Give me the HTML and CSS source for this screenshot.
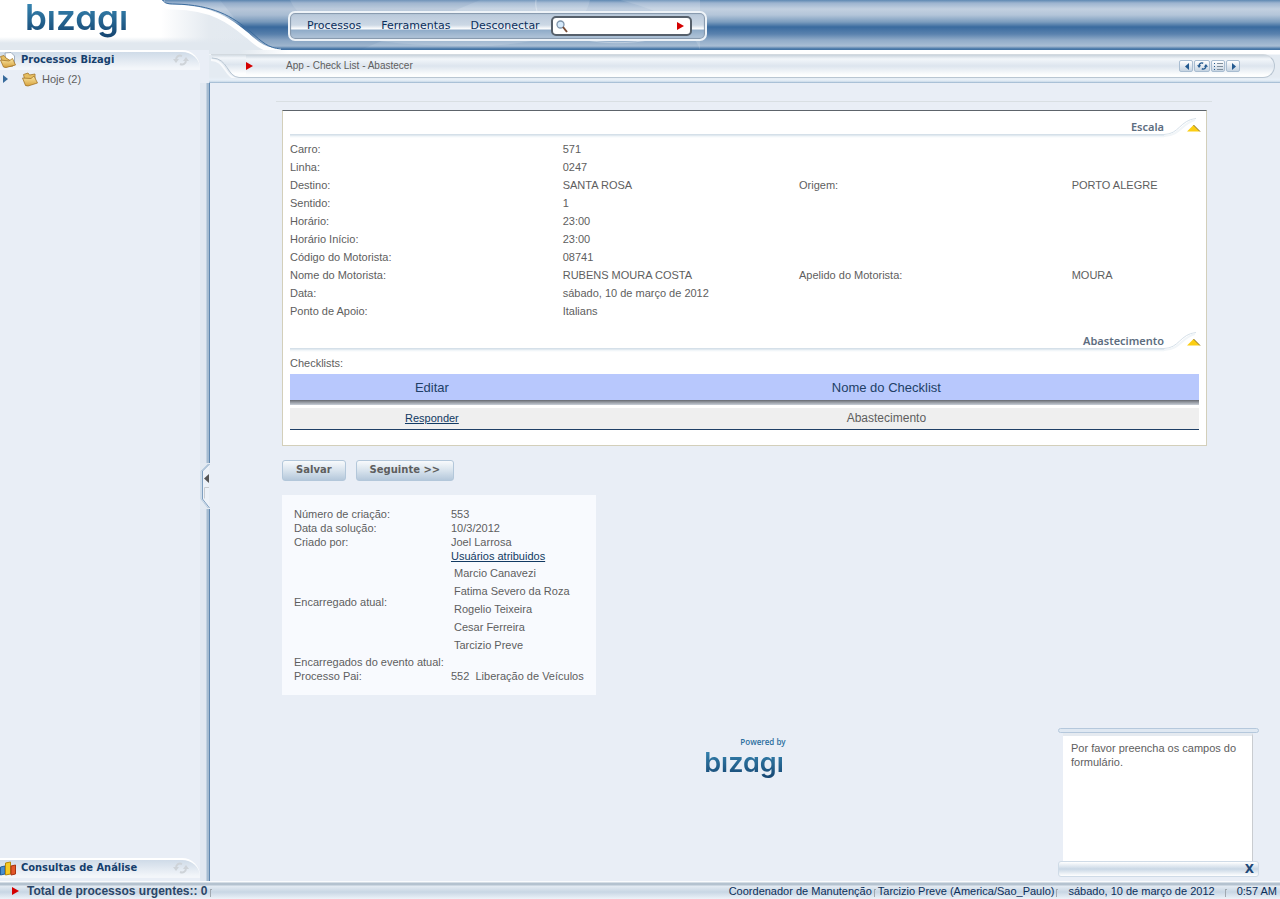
FILE: index.html
```html
<!DOCTYPE html>
<html lang="pt-BR">
<head>
<meta charset="utf-8">
<title>Bizagi - Abastecer</title>
<link rel="stylesheet" href="styles.css">
</head>
<body>
<svg class="defs" aria-hidden="true">
  <defs>
    <linearGradient id="folder" x1="0" y1="0" x2="0" y2="1"><stop offset="0" stop-color="#fbe9a6"/><stop offset="1" stop-color="#d7a13c"/></linearGradient>
    <symbol id="i-folder" viewBox="0 0 16 16">
      <path d="M1.500 3.500 L6 2 L7.500 4 L13 3 L13 12 L4 14.500 Z" fill="#e6bf63" stroke="#a4762a" stroke-width="0.800"/>
      <path d="M0.500 7 L9 7.500 L12 5 L15.500 12 L6 15 L3.500 14.500 Z" fill="url(#folder)" stroke="#a4762a" stroke-width="0.800"/>
    </symbol>
    <symbol id="i-docs" viewBox="0 0 16 16">
      <path d="M5 1 L11 0.500 L14.500 4 L14.500 12 L6 12 Z" fill="#fff" stroke="#8d9db0" stroke-width="0.800"/>
      <path d="M0.500 4.500 L4 3.500 L6 6 L11 9 L13 14 L4.500 15 Z" fill="#e6bf63" stroke="#a4762a" stroke-width="0.800"/>
      <path d="M0.500 8 L9 9 L12.500 6.500 L15.500 13 L6 15.500 L3.500 15 Z" fill="url(#folder)" stroke="#a4762a" stroke-width="0.800"/>
    </symbol>
    <symbol id="i-refresh" viewBox="0 0 16 14">
      <path d="M3 7 C3 3 6 1.800 9 3 M13 7 C13 11 10 12.200 7 11" fill="none" stroke="currentColor" stroke-width="2"/>
      <path d="M0 6 L6 6 L3 10 Z M16 8 L10 8 L13 4 Z" fill="currentColor"/>
    </symbol>
  </defs>
</svg>
<div class="app">
  <header class="header">
    <svg class="waves" viewBox="0 0 560 50" aria-hidden="true">
      <path d="M130 0 Q150 46 310 46 Q420 46 430 0 Z" fill="#fff" opacity="0.140"/>
      <path d="M60 0 H320 L200 50 H100 Z" fill="#345f8d" opacity="0.080"/>
      <path d="M376 0 C370 42 470 55 520 30" fill="none" stroke="#fff" opacity="0.350"/>
      <path d="M460 0 Q530 18 540 50 V0 Z" fill="#fff" opacity="0.150"/>
    </svg>
    <div class="brand"><span class="logo logo-large" role="img" aria-label="bizagi">bızagı</span></div>
    <svg class="curve" viewBox="0 0 120 50" aria-hidden="true">
      <defs>
        <linearGradient id="fade" x1="0" y1="0" x2="1" y2="0"><stop offset="0" stop-color="#fff"/><stop offset="0.400" stop-color="#e4eaf0"/><stop offset="1" stop-color="#e2e9f1"/></linearGradient>
        <linearGradient id="floor" x1="0" y1="0" x2="0" y2="1"><stop offset="0.740" stop-color="#e1e8ef" stop-opacity="0"/><stop offset="0.860" stop-color="#e1e8ef"/></linearGradient>
      </defs>
      <path d="M0 0 H1 C2 5 5 6 13 6 C51 7 69 18 88 34 C99 44 104 49 120 50 H0 Z" fill="url(#fade)"/>
      <path d="M0 0 H1 C2 5 5 6 13 6 C51 7 69 18 88 34 C99 44 104 49 120 50 H0 Z" fill="url(#floor)"/>
      <path d="M1 1 C2 6 5 7 13 7 C51 8 68 20 87 36 C98 46 104 50 120 51" fill="none" stroke="#fff" stroke-width="5"/>
      <path d="M2 0 C3 3 6 4 14 4 C52 5 71 16 90 32 C101 42 107 48 120 49" fill="none" stroke="#3b6c9e" stroke-width="1"/>
    </svg>
    <nav class="menu">
      <a href="#">Processos</a>
      <a href="#">Ferramentas</a>
      <a href="#">Desconectar</a>
      <form class="search">
        <svg width="12" height="13" viewBox="0 0 12 13" aria-hidden="true"><circle cx="4.500" cy="4.500" r="3.500" fill="#d5e9fa" stroke="#7f95ac" stroke-width="1.300"/><path d="M7 7 L11 12" stroke="#774b35" stroke-width="2"/></svg>
        <input type="text" aria-label="Pesquisar">
        <button type="button" aria-label="Buscar"><span class="arrow-red"></span></button>
      </form>
    </nav>
  </header>

  <div class="body">
    <aside class="sidebar">
      <section>
        <h2 class="side-title"><svg width="16" height="16"><use href="#i-docs"/></svg><span>Processos Bizagi</span><svg class="side-refresh" width="16" height="14"><use href="#i-refresh"/></svg></h2>
        <a class="tree-item" href="#"><span class="arrow-blue"></span><svg width="16" height="16"><use href="#i-folder"/></svg><span>Hoje (2)</span></a>
      </section>
      <h2 class="side-title"><svg width="16" height="16" viewBox="0 0 16 16"><path d="M0.500 7 L5 6 V14 L0.500 15 Z" fill="#4a8fd0" stroke="#25609d"/><path d="M5.500 3 L10.500 2 V14 L5.500 15 Z" fill="#f6cb26" stroke="#b88808"/><path d="M11 6 L15.500 5 V14 L11 15 Z" fill="#e2582b" stroke="#a83210"/></svg><span>Consultas de Análise</span><svg class="side-refresh" width="16" height="14"><use href="#i-refresh"/></svg></h2>
    </aside>

    <div class="work">
      <div class="toolbar">
        <svg class="tab" width="40" height="24" viewBox="0 0 40 24" aria-hidden="true">
          <defs><linearGradient id="bar" x1="0" y1="0" x2="0" y2="1"><stop offset="0" stop-color="#c9d3dc"/><stop offset="0.170" stop-color="#f2f6fa"/><stop offset="0.460" stop-color="#dde5ee"/><stop offset="0.850" stop-color="#fdfefe"/></linearGradient></defs>
          <path d="M0 0 H40 V23 H28 C17 23 18 5 2 4 Z" fill="url(#bar)"/>
          <path d="M0 6 C15 6 13 24 27 25" fill="none" stroke="#f8fafc" stroke-width="2"/>
          <path d="M1 4 C17 4 16 23 28 23.500 H40" fill="none" stroke="#b9c6d2"/>
          <path d="M0 0.500 H40" stroke="#d2d9df"/>
        </svg>
        <div class="toolbar-inner">
          <span class="arrow-red"></span>
          <span class="crumb">App - Check List - Abastecer</span>
          <div class="tools">
            <button type="button" aria-label="Anterior"><svg width="11" height="11" viewBox="0 0 11 11"><path d="M8 2 V9 L4 5.500 Z" fill="#22598f"/></svg></button>
            <button type="button" aria-label="Atualizar" class="wide"><svg width="11" height="10"><use href="#i-refresh"/></svg></button>
            <button type="button" aria-label="Lista"><svg width="11" height="11" viewBox="0 0 11 11"><path d="M1 2.500 H2 M1 5.500 H2 M1 8.500 H2" stroke="#22598f"/><path d="M4 2.500 H10 M4 5.500 H10 M4 8.500 H10" stroke="#7f8e9c"/></svg></button>
            <button type="button" aria-label="Próximo"><svg width="11" height="11" viewBox="0 0 11 11"><path d="M4 2 V9 L8 5.500 Z" fill="#22598f"/></svg></button>
          </div>
        </div>
      </div>

      <div class="stage">
        <div class="splitter">
          <button type="button" class="handle" aria-label="Recolher painel"><svg width="10" height="46" viewBox="0 0 10 46"><path d="M10 0 H0 V46 H10 Z" fill="#e3eaf2"/><path d="M9.500 1 L2.500 8 V36 L9.500 45" fill="#edf2f8" stroke="#7f9fbf"/><path d="M8 1 L1 8 V36 L8 45" fill="none" stroke="#bccfe0"/><path d="M9 11 V20 L4 15.500 Z" fill="#555"/><path d="M9 24.500 H4.500 V35.500" fill="none" stroke="#c8ccd0"/></svg></button>
        </div>
        <main class="content">
          <div class="rule"></div>
          <div class="panel">
            <div class="section-head"><span class="section-line"></span><h3>Escala</h3><button type="button" aria-label="Recolher Escala"><svg width="37" height="19" viewBox="0 0 37 19"><path d="M0 16.500 C15 16.500 16 2 32 0.500" fill="none" stroke="#d5e0e9"/><path d="M0 18 C16 18 18 5 31 2" fill="none" stroke="#f1f5f8" stroke-width="2"/><path d="M23 13.500 L29.500 7 L36 13.500 Z" fill="#fcce13"/><path d="M29.500 7 L36 13.500" fill="none" stroke="#8a7020"/></svg></button></div>
            <dl class="fields">
              <dt>Carro:</dt><dd>571</dd>
              <dt>Linha:</dt><dd>0247</dd>
              <dt>Destino:</dt><dd class="half">SANTA ROSA</dd><dt class="second">Origem:</dt><dd class="last">PORTO ALEGRE</dd>
              <dt>Sentido:</dt><dd>1</dd>
              <dt>Horário:</dt><dd>23:00</dd>
              <dt>Horário Início:</dt><dd>23:00</dd>
              <dt>Código do Motorista:</dt><dd>08741</dd>
              <dt>Nome do Motorista:</dt><dd class="half">RUBENS MOURA COSTA</dd><dt class="second">Apelido do Motorista:</dt><dd class="last">MOURA</dd>
              <dt>Data:</dt><dd>sábado, 10 de março de 2012</dd>
              <dt>Ponto de Apoio:</dt><dd>Italians</dd>
            </dl>
            <div class="section-head spaced"><span class="section-line"></span><h3>Abastecimento</h3><button type="button" aria-label="Recolher Abastecimento"><svg width="37" height="19" viewBox="0 0 37 19"><path d="M0 16.500 C15 16.500 16 2 32 0.500" fill="none" stroke="#d5e0e9"/><path d="M0 18 C16 18 18 5 31 2" fill="none" stroke="#f1f5f8" stroke-width="2"/><path d="M23 13.500 L29.500 7 L36 13.500 Z" fill="#fcce13"/><path d="M29.500 7 L36 13.500" fill="none" stroke="#8a7020"/></svg></button></div>
            <table class="checklist">
              <caption>Checklists:</caption>
              <thead><tr><th scope="col">Editar</th><th scope="col">Nome do Checklist</th></tr></thead>
              <tbody><tr class="edge"><td colspan="2"></td></tr><tr><td><a href="#">Responder</a></td><td>Abastecimento</td></tr></tbody>
            </table>
          </div>
          <div class="actions"><button type="button">Salvar</button><button type="button">Seguinte &gt;&gt;</button></div>
          <dl class="details">
            <dt>Número de criação:</dt><dd>553</dd>
            <dt>Data da solução:</dt><dd>10/3/2012</dd>
            <dt>Criado por:</dt><dd>Joel Larrosa</dd>
            <dt>Encarregado atual:</dt>
            <dd><a href="#">Usuários atribuidos</a>
              <ul><li>Marcio Canavezi</li><li>Fatima Severo da Roza</li><li>Rogelio Teixeira</li><li>Cesar Ferreira</li><li>Tarcizio Preve</li></ul>
            </dd>
            <dt>Encarregados do evento atual:</dt><dd></dd>
            <dt>Processo Pai:</dt><dd>552&nbsp; Liberação de Veículos</dd>
          </dl>
          <div class="powered"><span class="powered-by">Powered by</span><span class="logo logo-small" role="img" aria-label="bizagi">bızagı</span></div>
        </main>
        <aside class="note">
          <div class="note-top"></div>
          <p>Por favor preencha os campos do formulário.</p>
          <div class="note-bottom"><button type="button" aria-label="Fechar">X</button></div>
        </aside>
      </div>
    </div>
  </div>

  <footer class="status">
    <span class="arrow-red"></span>
    <strong>Total de processos urgentes:: 0</strong>
    <i class="sep"></i>
    <span class="role">Coordenador de Manutenção</span><i class="sep"></i>
    <span class="user">Tarcizio Preve (America/Sao_Paulo)</span><i class="sep"></i>
    <span class="date">sábado, 10 de março de 2012</span><i class="sep"></i>
    <span class="time">0:57 AM</span>
  </footer>
</div>
</body>
</html>
```
FILE: styles.css
```css
* { box-sizing: border-box; }
body {
  margin: 0;
  font: 11px/14px "Liberation Sans", Arial, sans-serif;
  color: #5e5e5e;
  background: #e9eef6;
}
button { font: inherit; color: inherit; border: 0; background: none; padding: 0; cursor: pointer; }
h2, h3, p, dl, dd, ul { margin: 0; padding: 0; }
svg { display: block; flex: none; }
.defs { position: absolute; width: 0; height: 0; }
.app { min-height: 100vh; display: flex; flex-direction: column; }

.arrow-red { flex: none; border: solid transparent; border-width: 4px 0 4px 7px; border-left-color: #d40000; }
.arrow-blue { flex: none; border: solid transparent; border-width: 4px 0 4px 5px; border-left-color: #376a9b; }

/* Header */
.header {
  position: relative;
  display: flex;
  height: 50px;
  background: linear-gradient(#5e88b2 0, #9db4cf 3px, #c2d0e0 9px, #b3c5d9 15px, #7c9dbe 22px, #3a6b9f 27px, #5a82ae 34px, #90abc8 40px, #a9bed4 46px, #4474a5 49px, #4474a5 50px);
}
.waves { position: absolute; left: 160px; top: 0; width: 560px; height: 50px; }
.brand {
  position: relative;
  width: 161px;
  padding-left: 25px;
  background: linear-gradient(#fff 37px, #e1e8ef 43px, #e1e8ef);
}
.logo {
  display: block;
  font-family: Inter, sans-serif;
  font-feature-settings: "cv11";
  font-weight: 600;
  color: transparent;
  background: linear-gradient(#3a8cb8, #123f6b);
  -webkit-background-clip: text;
  background-clip: text;
}
.logo-large { font-size: 35px; line-height: 34px; padding-bottom: 6px; }
.logo-small { font-size: 27px; line-height: 32px; padding-bottom: 2px; }
.curve { position: relative; width: 120px; height: 50px; }
.menu {
  position: relative;
  display: flex;
  align-items: center;
  gap: 20px;
  height: 30px;
  margin: 11px 0 0 7px;
  padding: 0 13px 0 17px;
  border: 2px solid #eef3f8;
  border-radius: 7px;
  box-shadow: inset 0 0 1px 1px #8496aa;
  background: linear-gradient(#b7c7d9, #ccd8e5 12px, #fff 16px, #8fabc8 17px, #b5c7da);
  font: 11px/14px "DejaVu Sans", Verdana, sans-serif;
}
.menu a { color: #0b2f5c; text-decoration: none; }
.search {
  display: flex;
  align-items: center;
  width: 141px;
  height: 20px;
  margin-left: -9px;
  padding: 0 6px 0 3px;
  border: 2px solid #56606b;
  border-radius: 5px;
  background: #fff;
}
.search input { flex: 1; min-width: 0; border: 0; outline: 0; background: none; font: inherit; }
.search button { display: flex; }

.body { flex: 1; display: flex; }

/* Sidebar */
.sidebar { width: 200px; display: flex; flex-direction: column; justify-content: space-between; padding-bottom: 3px; }
.side-title {
  display: flex;
  align-items: center;
  gap: 5px;
  height: 20px;
  padding: 0 11px 2px 0;
  border-top: 2px solid #fff;
  border-top-right-radius: 18px;
  background: linear-gradient(#cfdbe8, #f3f6fa 90%);
  font: bold 11px/16px "DejaVu Sans Condensed", Tahoma, sans-serif;
  color: #163f6d;
}
.side-refresh { margin-left: auto; color: #ced3d8; }
.tree-item { display: flex; align-items: center; height: 18px; gap: 4px; padding-left: 3px; color: #5e5e5e; text-decoration: none; }
.tree-item svg { margin-left: 10px; }

/* Work area */
.work { flex: 1; min-width: 0; display: flex; flex-direction: column; }
.toolbar {
  display: flex;
  height: 33px;
  margin-left: 9px;
  padding: 4px 5px 0 2px;
  background:
    linear-gradient(90deg, #e1e8ef 30px, transparent 80px) 0 0 / 100% 4px no-repeat,
    linear-gradient(#fff 0, #fff 4px, #e4ebf2 5px, #e4ebf2 27px, #e8f0f8 30px, #c9d9e8 32px, #8aa8c5 33px);
}
.toolbar-inner {
  flex: 1;
  display: flex;
  align-items: center;
  height: 24px;
  padding-right: 34px;
  border: 1px solid #b9c6d2;
  border-left: 0;
  border-top-color: #d2d9df;
  border-radius: 0 12px 12px 0;
  background: linear-gradient(#c9d3dc, #f2f6fa 4px, #dde5ee 11px, #fdfefe 20px);
}
.tab { margin-right: -5px; }
.crumb { margin-left: 33px; font: 10px/14px "Liberation Sans", Arial, sans-serif; }
.tools { display: flex; gap: 1px; margin-left: auto; color: #22598f; }
.tools button { display: flex; align-items: center; justify-content: center; width: 14px; height: 12px; border: 1px solid #a9bdd1; border-radius: 2px; background: linear-gradient(#fff, #c5d3e1); }
.tools .wide { width: 16px; }

.stage { position: relative; flex: 1; display: flex; }
.splitter { position: relative; width: 10px; background: linear-gradient(90deg, #e1e8f1 6px, #a4bbd1 7px, #a4bbd1 9px, #5f87af 9px); }
.handle { position: absolute; left: 0; top: 380px; }
.content { flex: 1; padding: 18px 68px 0 66px; }
.rule { height: 1px; background: #d9dfe3; }
.panel { margin: 8px 5px 0 6px; padding: 7px 7px 15px; border: 1px solid #d3cfba; border-top-color: #5d646b; background: #fff; }

.section-head { display: flex; align-items: flex-start; height: 22px; margin-right: -2px; }
.section-head.spaced { height: 34px; padding-top: 12px; }
.section-line { flex: 1; height: 20px; background: linear-gradient(transparent 16px, #d5e0e9 16px, #d5e0e9 17px, #edf3f7 18px, #fff 20px); }
.section-head h3 {
  padding-left: 4px;
  font: 600 11px/17px "Noto Sans", Tahoma, sans-serif;
  color: #5d6d80;
  height: 20px;
  background: linear-gradient(transparent 16px, #d5e0e9 16px, #d5e0e9 17px, #edf3f7 18px, #fff 20px);
}
.fields { display: grid; grid-template-columns: 30% 26% 30% 14%; line-height: 18px; }
.fields dt { grid-column: 1; }
.fields dd { grid-column: 2 / 5; }
.fields .half { grid-column: 2; }
.fields .second { grid-column: 3; }
.fields .last { grid-column: 4; }

.checklist { width: 100%; border-collapse: collapse; text-align: center; }
.checklist caption { height: 20px; text-align: left; line-height: 18px; }
.checklist th { height: 26px; padding: 1px 0 0 2px; background: #b8c8fd; font-size: 13px; font-weight: normal; color: #213f66; }
.checklist th:first-child { width: 31%; }
.checklist td { height: 21px; padding: 0 0 0 2px; background: #efefef; font-size: 12px; border-bottom: 1px solid #1f3f66; }
.checklist .edge td { height: 8px; border: 0; background: linear-gradient(#65686f, #8f949c 2px, #c9cfd8 5px, #fff 5px); }
.checklist td:first-child a { font-size: 11px; }
a { color: #123a63; }

.actions { display: flex; gap: 10px; margin: 14px 0 14px 6px; }
.actions button {
  height: 21px;
  padding: 0 13px 1px;
  border: 1px solid #b3c7da;
  border-radius: 3px;
  background: linear-gradient(#f8fafc, #d8e3ed 50%, #b5c8db);
  font: bold 10px/17px "DejaVu Sans", Verdana, sans-serif;
}
.details {
  display: grid;
  grid-template-columns: 157px auto;
  align-items: center;
  width: fit-content;
  margin-left: 6px;
  padding: 12px;
  background: #f8fafe;
}
.details dd { min-height: 14px; }
.details ul { list-style: none; padding: 1px 0 1px 3px; line-height: 18px; }
.powered { display: flex; flex-direction: column; align-items: center; margin-top: 42px; }
.powered-by { margin-left: 38px; font: 600 8px/10px "Open Sans", sans-serif; color: #2c6f9f; }

.note { position: absolute; right: 21px; bottom: 4px; width: 201px; display: flex; flex-direction: column; }
.note-top { height: 5px; border: 1px solid #b5c8dc; border-radius: 3px; background: #dfe8f2; }
.note p { min-height: 128px; margin: 0 6px 0 5px; padding: 5px 8px; border-top: 3px solid #e5eaf0; border-right: 1px solid #c9ccd0; background: #fff; }
.note-bottom { display: flex; justify-content: flex-end; height: 16px; padding-right: 4px; border: 1px solid #cfdbe7; border-radius: 3px; background: linear-gradient(#fff, #c9d7e5 50%, #fff); }
.note-bottom button { font: bold 12px/14px "DejaVu Sans", sans-serif; color: #1c4775; }

/* Status bar */
.status {
  display: flex;
  align-items: center;
  height: 18px;
  padding: 2px 3px 0 12px;
  background: linear-gradient(#fff, #f5f8fb 1px, #b4c2cf 2px, #b4c2cf 4px, #e4ebf3 5px, #c8d6e4 11px, #edf3f9);
  color: #0c2f5a;
}
.status strong { margin-left: 8px; font-size: 12px; color: #2b4668; }
.sep { width: 2px; height: 8px; margin: 4px 2px 0; border: 1px solid #a0a8b0; border-width: 1px 0 0 1px; }
.role { margin-left: auto; }
.date { margin: 0 8px; }
.time { margin-left: 8px; }
```
